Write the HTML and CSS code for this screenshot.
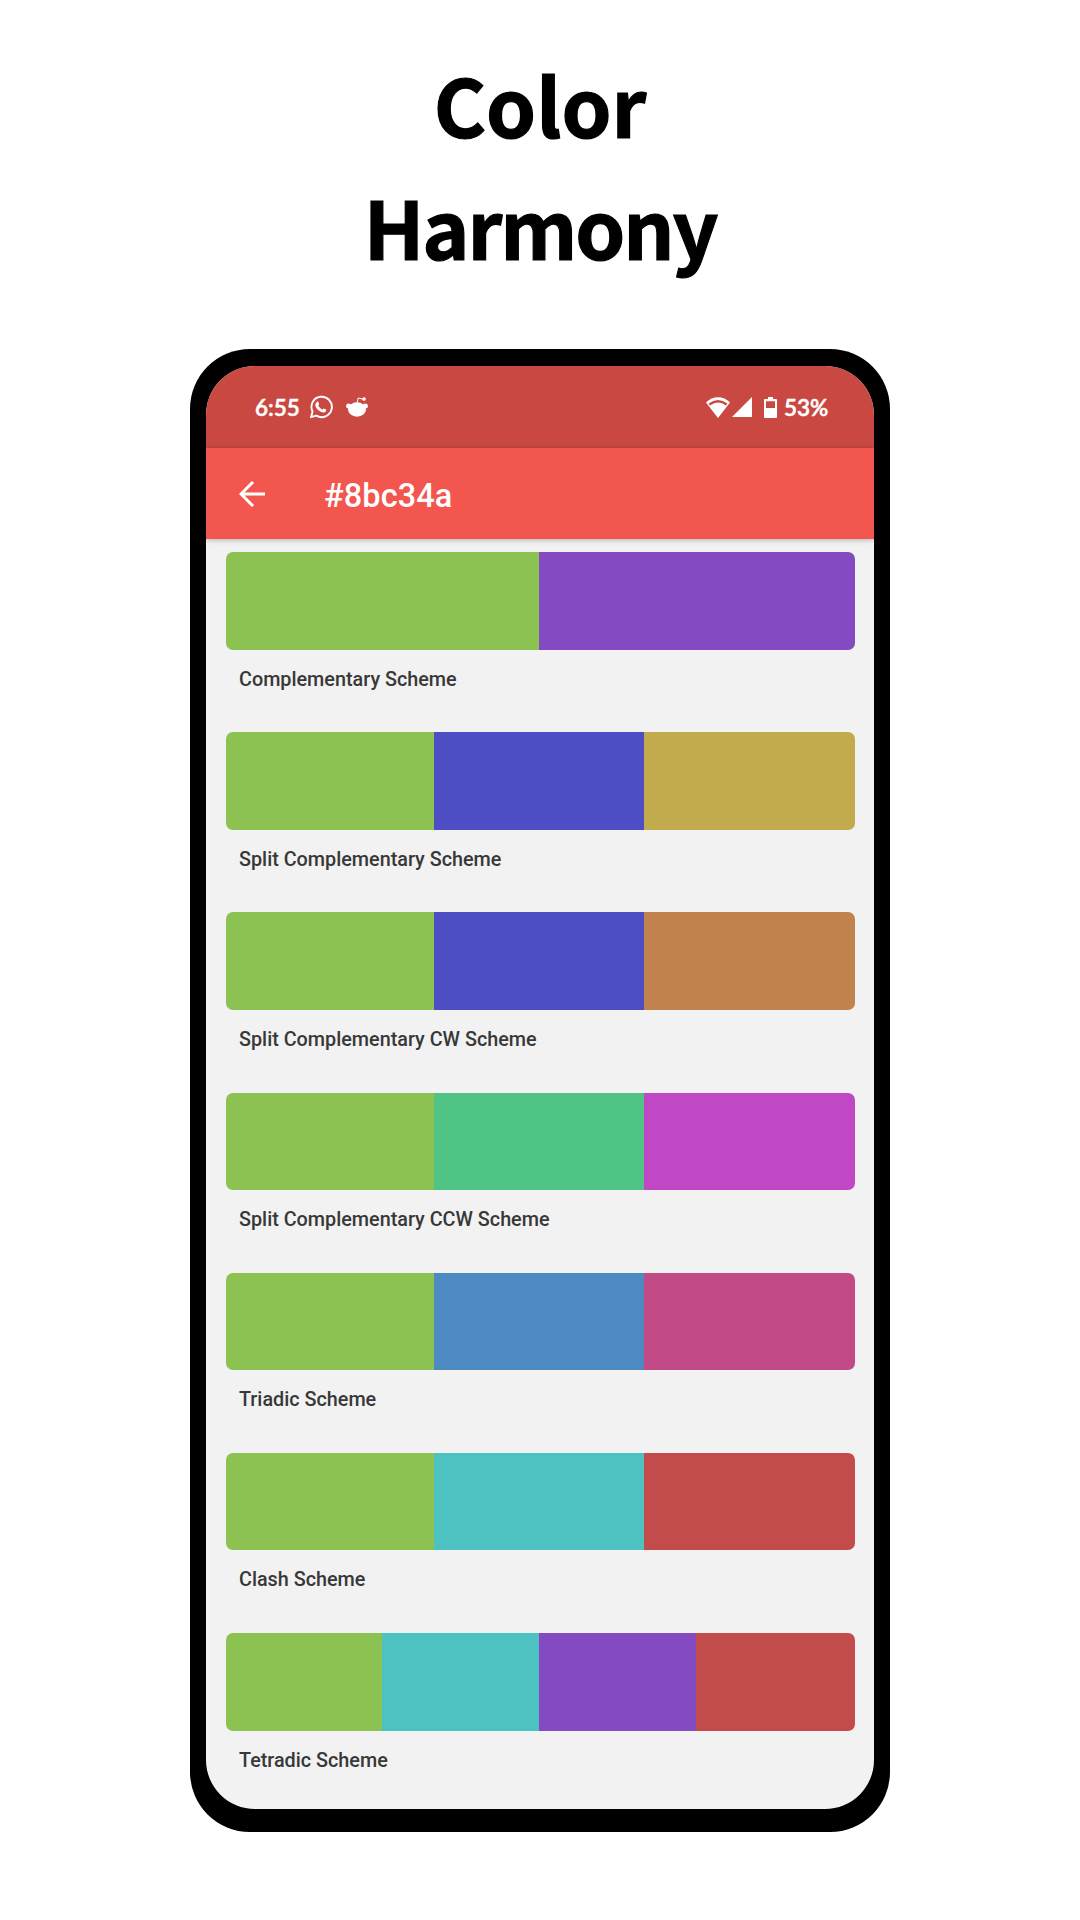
FILE: index.html
```html
<!DOCTYPE html>
<html lang="en">
<head>
<meta charset="utf-8">
<title>Color Harmony</title>
<link rel="stylesheet" href="styles.css">
</head>
<body>
<h1 class="headline"><span class="line-one">Color</span><span class="line-two">Harmony</span></h1>
<main class="phone">
  <div class="screen">
    <div class="status">
      <span class="time">6:55</span>
      <svg class="chat" viewBox="0 0 24 24" width="24" height="24"><path d="M2 22.2 3.6 16.6A10.2 10.2 0 1 1 7.3 20.6Z" fill="none" stroke="#fff" stroke-width="1.9" stroke-linejoin="round"/><path d="M8.1 6.700c.7-.3 1.1 0 1.3.6l.7 1.700c.2.5-.7 1.100-.8 1.600.8 1.800 2.100 3.100 4 3.900.5-.1 1.100-1.300 1.600-1.100l2 1c.7.4.3 1.800-.3 2.300-1.400 1.200-3.100.8-4.800 0-2.200-1-4.100-2.900-5.100-5-.9-2-.3-4 1.400-5z" fill="#fff"/></svg>
      <svg class="alien" viewBox="0 0 22 20" width="22" height="20"><ellipse cx="11" cy="12.500" rx="9" ry="7.200" fill="#fff"/><circle cx="2.600" cy="9.100" r="2.500" fill="#fff"/><circle cx="19.400" cy="9.100" r="2.500" fill="#fff"/><path d="m11 6 1.200-5 5.300 1.200" fill="none" stroke="#fff" stroke-width="1"/><circle cx="18" cy="2.100" r="1.800" fill="#fff"/></svg>
      <svg class="wifi" viewBox="0 0 24 21" width="24" height="21"><path d="M0 5.600C7-1.600 17-1.600 24 5.600L12 21Z" fill="#fff"/><path d="M2.600 6.600Q12-.8 21.400 6.600L20 8.400Q12 2.600 4 8.400Z" fill="#ca4842"/></svg>
      <svg class="signal" viewBox="0 0 20 20" width="20" height="20"><path d="M20 0v20H0z" fill="#fff"/></svg>
      <svg class="battery" viewBox="0 0 13 21" width="13" height="21"><path fill-rule="evenodd" d="M4 0h5v2h3q1 0 1 1v17q0 1-1 1H1q-1 0-1-1V3q0-1 1-1h3zM2 4.200V11h9V4.200z" fill="#fff"/></svg>
      <span class="percent">53%</span>
    </div>
    <header class="appbar">
      <svg viewBox="0 0 26 26" width="26" height="26"><path d="M26 13H2M14 1 2 13l12 12" fill="none" stroke="#fff" stroke-width="3"/></svg>
      <span>#8bc34a</span>
    </header>
    <div class="list">
      <section class="scheme"><div class="bar two"><i class="green"></i><i class="purple"></i></div><p>Complementary Scheme</p></section>
      <section class="scheme"><div class="bar"><i class="green"></i><i class="indigo"></i><i class="gold"></i></div><p>Split Complementary Scheme</p></section>
      <section class="scheme"><div class="bar"><i class="green"></i><i class="indigo"></i><i class="copper"></i></div><p>Split Complementary CW Scheme</p></section>
      <section class="scheme"><div class="bar"><i class="green"></i><i class="mint"></i><i class="magenta"></i></div><p>Split Complementary CCW Scheme</p></section>
      <section class="scheme"><div class="bar"><i class="green"></i><i class="blue"></i><i class="rose"></i></div><p>Triadic Scheme</p></section>
      <section class="scheme"><div class="bar"><i class="green"></i><i class="teal"></i><i class="red"></i></div><p>Clash Scheme</p></section>
      <section class="scheme"><div class="bar four"><i class="green"></i><i class="teal"></i><i class="purple"></i><i class="red"></i></div><p>Tetradic Scheme</p></section>
    </div>
  </div>
</main>
</body>
</html>
```
FILE: styles.css
```css
* { box-sizing: border-box; }
body { margin: 0; height: 1920px; overflow: hidden; background: #fff; display: flex; flex-direction: column; align-items: center; }
.headline { margin: 0; padding-top: 42px; height: 349px; flex: none; font: 700 80px/122px "Noto Sans CJK JP", sans-serif; color: #000; text-align: center; -webkit-text-stroke: 1.2px #000; stroke-linejoin: round; }
.headline span { display: block; }
.line-one { letter-spacing: 0; }
.line-two { letter-spacing: -2.1px; }
.phone { flex: none; width: 700px; height: 1482.5px; background: #000; border-radius: 60px; padding: 17px 16px 22px; }
.screen { height: 1443px; border-radius: 49px; overflow: hidden; background: #f2f2f2; font-family: Roboto, sans-serif; }
.status { height: 82px; background: #ca4842; color: #fff; display: flex; align-items: center; padding: 0 46px 0 49px; font: 600 22.5px/30px Lato, sans-serif; }
.time, .percent { padding-top: 2px; -webkit-text-stroke: .5px #fff; }
.time { width: 54px; }
.alien { margin-left: 13px; }
.wifi { margin-left: auto; }
.signal { margin-left: 2px; }
.battery { margin: 0 7px 0 12px; }
.percent { width: 44px; }
.appbar { position: relative; height: 91px; background: #f2564f; color: #fff; display: flex; align-items: center; padding: 2px 33px 0; box-shadow: 0 1px 5px rgba(0,0,0,.28); font-size: 32.5px; font-weight: 500; gap: 59px; letter-spacing: .1px; }
.appbar svg { margin-bottom: 2px; }
.appbar span { padding-top: 2px; }
.list { padding: 13px 19px 0 20px; }
.scheme { height: 180.2px; }
.bar { height: 97.5px; border-radius: 7px; overflow: hidden; display: grid; grid-template-columns: 208px 210px 1fr; }
.two { grid-template-columns: 313px 1fr; }
.four { grid-template-columns: 156px 157px 157px 1fr; }
.scheme p { margin: 17px 0 0 13px; font-size: 19.8px; line-height: 26px; font-weight: 500; color: #383838; white-space: nowrap; }
.green { background: #8cc251; }
.purple { background: #834ac1; }
.indigo { background: #4e4ec4; }
.gold { background: #c1ab4c; }
.copper { background: #c1824d; }
.mint { background: #50c485; }
.magenta { background: #c048c4; }
.blue { background: #4c8ac1; }
.rose { background: #c14a87; }
.teal { background: #4ec2c0; }
.red { background: #c24b4c; }
```
